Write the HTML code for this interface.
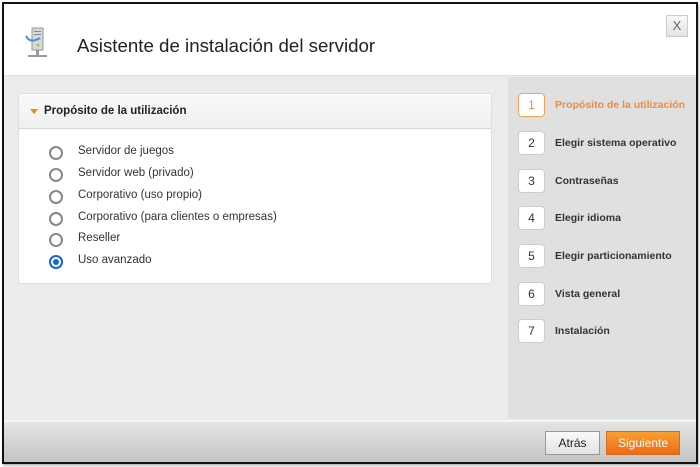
<!DOCTYPE html>
<html><head><style>
*{box-sizing:border-box;margin:0;padding:0}
body{width:700px;height:467px;background:#fff;font-family:"Liberation Sans",sans-serif;position:relative;overflow:hidden}
#win{position:absolute;left:2px;top:2px;width:696px;height:462px;border:2px solid #111;background:#ececec;box-shadow:1px 2px 2px #bbb}
#hdr{position:absolute;left:0;top:0;right:0;height:72px;background:#fff;border-bottom:1px solid #ddd}
#hdr h1{position:absolute;left:73px;top:31px;font-weight:normal;font-size:18.7px;color:#222}
#x{position:absolute;left:662px;top:11px;width:22px;height:22px;border:1px solid #ccc;background:linear-gradient(#f8f8f8,#e4e4e4);color:#666;font-size:13px;text-align:center;line-height:20px}
#side{position:absolute;left:504px;top:73px;width:188px;height:342px;background:#e0e0e0}
.st{position:absolute;left:10px;height:24px;font-size:10.5px;color:#333;font-weight:bold}
.st b{position:absolute;left:0;top:0;width:27px;height:24px;border:1px solid #ccc;border-radius:4px;background:#fff;text-align:center;line-height:22px;font-weight:normal;font-size:12px}
.st span{position:absolute;left:37px;top:6px;white-space:nowrap}
.st.on{color:#f08a3c}.st.on b{border-color:#f7a25a;color:#f08a3c}
#panel{position:absolute;left:14px;top:89px;width:474px;height:191px;background:#fff;border:1px solid #ddd;border-radius:3px}
#ph{height:35px;background:linear-gradient(#fafafa,#efefef);border-bottom:1px solid #d6d6d6;font-size:11.5px;font-weight:bold;color:#222;padding:11px 0 0 25px;position:relative}
#ph:before{content:"";position:absolute;left:11px;top:15px;border-left:4px solid transparent;border-right:4px solid transparent;border-top:5px solid #f08a1c}
.r{position:absolute;left:30px;font-size:11.5px;color:#333}
.r i{position:absolute;left:0;top:0;width:14px;height:14px;border:2px solid #888;border-radius:50%}
.r span{position:absolute;left:29px;top:-1px;white-space:nowrap}
.r.on i{border-color:#1565d8}.r.on i:after{content:"";position:absolute;left:2px;top:2px;width:6px;height:6px;border-radius:50%;background:#1565d8}
#foot{position:absolute;left:0;top:416px;right:0;height:42px;background:linear-gradient(#e4e4e4,#c4c4c4);border-top:2px solid #f6f6f6}
.btn{position:absolute;top:9px;height:24px;font-size:12px;text-align:center;line-height:22px}
</style></head><body>
<div id="win">
<div id="hdr">
<svg style="position:absolute;left:20px;top:22px" width="30" height="34" viewBox="0 0 30 34">
<rect x="8" y="2" width="11" height="22" fill="#d8d8d8" stroke="#999"/>
<rect x="10" y="5" width="7" height="1" fill="#888"/><rect x="10" y="8" width="7" height="1" fill="#888"/>
<circle cx="14" cy="19" r="1.3" fill="#7c3"/>
<path d="M2 10 Q6 18 16 12" stroke="#4a8ee0" stroke-width="2" fill="none"/>
<rect x="12" y="24" width="3" height="5" fill="#999"/><rect x="4" y="29" width="19" height="2" fill="#999"/>
</svg>
<h1>Asistente de instalación del servidor</h1>
<div id="x">X</div>
</div>
<div id="side">
<div class="st on" style="top:16px"><b>1</b><span>Propósito de la utilización</span></div>
<div class="st" style="top:54px"><b>2</b><span>Elegir sistema operativo</span></div>
<div class="st" style="top:92px"><b>3</b><span>Contraseñas</span></div>
<div class="st" style="top:129px"><b>4</b><span>Elegir idioma</span></div>
<div class="st" style="top:167px"><b>5</b><span>Elegir particionamiento</span></div>
<div class="st" style="top:205px"><b>6</b><span>Vista general</span></div>
<div class="st" style="top:242px"><b>7</b><span>Instalación</span></div>
</div>
<div id="panel">
<div id="ph">Propósito de la utilización</div>
<div class="r" style="top:52px"><i></i><span>Servidor de juegos</span></div>
<div class="r" style="top:74px"><i></i><span>Servidor web (privado)</span></div>
<div class="r" style="top:96px"><i></i><span>Corporativo (uso propio)</span></div>
<div class="r" style="top:118px"><i></i><span>Corporativo (para clientes o empresas)</span></div>
<div class="r" style="top:139px"><i></i><span>Reseller</span></div>
<div class="r on" style="top:161px"><i></i><span>Uso avanzado</span></div>
</div>
<div id="foot">
<div class="btn" style="left:541px;width:55px;border:1px solid #999;background:linear-gradient(#fafafa,#e2e2e2);color:#222">Atrás</div>
<div class="btn" style="left:602px;width:74px;border:1px solid #d86a1a;background:linear-gradient(#f9a030,#ec6a1c);color:#fff">Siguiente</div>
</div>
</div>
</body></html>
